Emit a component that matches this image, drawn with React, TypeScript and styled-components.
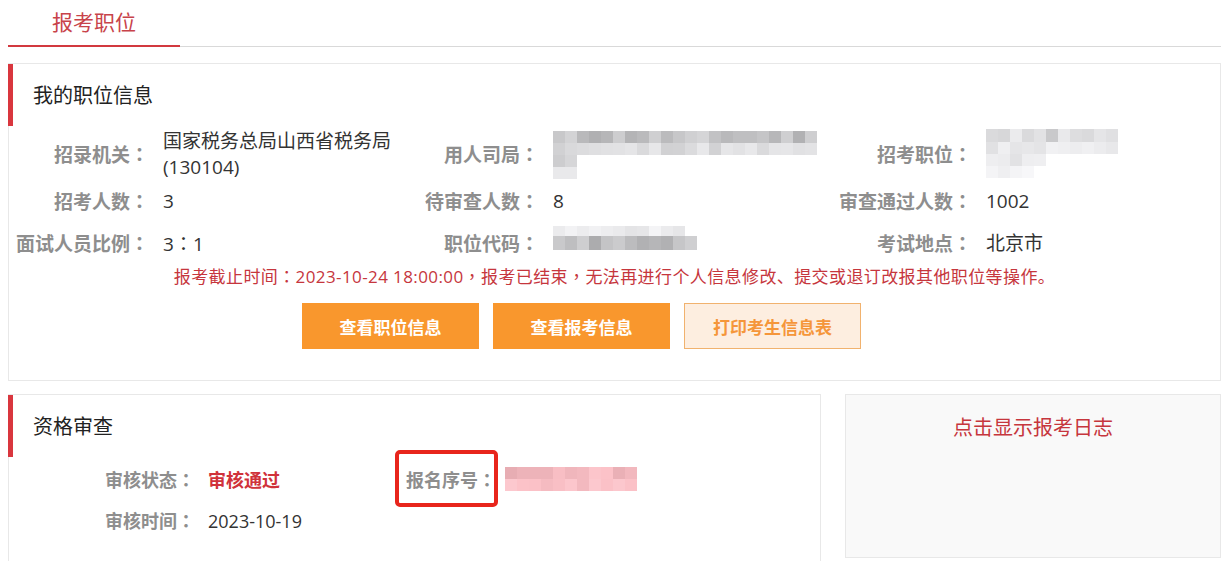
import React from "react";
import styled, { createGlobalStyle } from "styled-components";

const GlobalStyle = createGlobalStyle`
    body {
        margin: 0;
        background: #fff;
        font-family: "Open Sans", "Noto Sans CJK SC", sans-serif;
        color: #333;
    }
`;

const Page = styled.div`
    width: 1213px;
    padding-left: 8px;
`;

const TabBar = styled.div`
    display: flex;
    border-bottom: 1px solid #d9d9d9;
    margin-bottom: 16px;
`;

const Tab = styled.div`
    width: 172px;
    height: 45px;
    line-height: 45px;
    text-align: center;
    font-size: 21px;
    color: #c8434a;
    border-bottom: 2px solid #d2393f;
    margin-bottom: -1px;
`;

const Card = styled.div<{ $muted?: boolean }>`
    border: 1px solid #e8e8e8;
    background: ${(p) => (p.$muted ? "#f9f9f9" : "#fff")};
`;

const CardTitle = styled.div`
    height: 62px;
    line-height: 64px;
    margin-left: -1px;
    padding-left: 20px;
    border-left: 5px solid #d9363e;
    font-size: 20px;
    color: #222;
`;

// centred full-width punctuation, as the original font draws it
const Punct = styled.span`
    font-family: "Noto Sans CJK TC", sans-serif;
`;

const InfoGrid = styled.div`
    display: grid;
    grid-template-columns: 154px 260px 130px 279px 154px 1fr;
    grid-template-rows: 52px 42px 42px;
    margin-top: 2px;
`;

const Label = styled.div<{ $size?: number }>`
    align-self: center;
    text-align: right;
    padding-right: 14px;
    font-size: ${(p) => p.$size ?? 19}px;
    font-weight: bold;
    color: #8e8e8e;
    line-height: 26px;
    white-space: nowrap;
`;

const Value = styled.div<{ $top?: number; $strong?: boolean; $size?: number }>`
    align-self: ${(p) => (p.$top !== undefined ? "start" : "center")};
    margin-top: ${(p) => p.$top ?? 0}px;
    font-size: ${(p) => p.$size ?? 19}px;
    line-height: 26px;
    color: ${(p) => (p.$strong ? "#d0323a" : "#333")};
    font-weight: ${(p) => (p.$strong ? "bold" : "normal")};
`;

const Notice = styled.div`
    text-align: center;
    font-size: 17px;
    letter-spacing: 0.4px;
    line-height: 24px;
    color: #c6363d;
`;

const ButtonRow = styled.div`
    display: flex;
    gap: 14px;
    padding: 14px 0 31px 293px;
`;

const Button = styled.button<{ $light?: boolean }>`
    width: 177px;
    height: 46px;
    border: 1px solid ${(p) => (p.$light ? "#f1b26e" : "#f9972d")};
    background: ${(p) => (p.$light ? "#fdeee0" : "#f9972d")};
    color: ${(p) => (p.$light ? "#f5963a" : "#fff")};
    font-family: "Noto Sans CJK SC", sans-serif;
    font-size: 17px;
    font-weight: bold;
    cursor: pointer;
`;

const BottomRow = styled.div`
    display: flex;
    gap: 24px;
    margin-top: 13px;
`;

const AuditCard = styled(Card)`
    width: 811px;
    height: 190px;
`;

const LogCard = styled(Card)`
    flex: 1;
    box-sizing: border-box;
    height: 164px;
    padding-top: 20px;
    text-align: center;
    font-size: 20px;
    line-height: 26px;
    color: #c6363d;
    cursor: pointer;
`;

const AuditGrid = styled.div`
    display: grid;
    grid-template-columns: 199px 198px 99px 1fr;
    grid-auto-rows: 41px;
    margin-top: 2px;
`;

const AuditLabel = styled(Label)<{ $pad?: number }>`
    padding-right: ${(p) => p.$pad ?? 13}px;
`;

const Highlight = styled.span`
    position: relative;
    display: inline-block;
    line-height: 26px;
    &::after {
        content: "";
        position: absolute;
        top: -16px;
        bottom: -14px;
        left: -11px;
        right: -2px;
        border: 4px solid #e8251c;
        border-radius: 5px;
    }
`;

const MosaicGrid = styled.div`
    display: flex;
    flex-direction: column;
`;

const MosaicRow = styled.div`
    display: flex;
`;

const Cell = styled.span.attrs<{ $c: string; $w: number; $h: number }>((p) => ({
    style: { background: p.$c, width: p.$w, height: p.$h },
}))<{ $c: string; $w: number; $h: number }>`
    display: block;
    flex: none;
`;

function makeRand(seed: number) {
    let s = seed;
    return () => {
        s = (s * 9301 + 49297) % 233280;
        return s / 233280;
    };
}

type Tone = "gray" | "pink";

function rowColors(n: number, lo: number, hi: number, tone: Tone, r: () => number) {
    return Array.from({ length: n }, () => {
        const v = Math.round(lo + (hi - lo) * r());
        if (tone === "pink") {
            return `rgb(${Math.min(252, v + 18)},${v - 40},${v - 34})`;
        }
        return `rgb(${v},${v},${v + 2})`;
    });
}

interface MosaicSpec {
    cells: number;
    lo: number;
    hi: number;
    h: number;
}

function Mosaic({ rows, w, tone = "gray", seed }: { rows: MosaicSpec[]; w: number; tone?: Tone; seed: number }) {
    const r = makeRand(seed);
    return (
        <MosaicGrid>
            {rows.map((row, i) => (
                <MosaicRow key={i}>
                    {rowColors(row.cells, row.lo, row.hi, tone, r).map((c, j) => (
                        <Cell key={j} $c={c} $w={w} $h={row.h} />
                    ))}
                </MosaicRow>
            ))}
        </MosaicGrid>
    );
}

const C = () => <Punct>：</Punct>;

export default function App() {
    return (
        <Page>
            <GlobalStyle />
            <TabBar>
                <Tab>报考职位</Tab>
            </TabBar>

            <Card>
                <CardTitle>我的职位信息</CardTitle>
                <InfoGrid>
                    <Label>招录机关<C /></Label>
                    <Value>
                        国家税务总局山西省税务局
                        <br />
                        (130104)
                    </Value>
                    <Label>用人司局<C /></Label>
                    <Value $top={3}>
                        <Mosaic
                            seed={11}
                            w={12}
                            rows={[
                                { cells: 22, lo: 172, hi: 215, h: 12 },
                                { cells: 22, lo: 208, hi: 236, h: 12 },
                                { cells: 2, lo: 200, hi: 216, h: 12 },
                                { cells: 2, lo: 222, hi: 236, h: 12 },
                            ]}
                        />
                    </Value>
                    <Label>招考职位<C /></Label>
                    <Value $top={1}>
                        <Mosaic
                            seed={37}
                            w={12}
                            rows={[
                                { cells: 11, lo: 178, hi: 236, h: 13 },
                                { cells: 11, lo: 220, hi: 242, h: 12 },
                                { cells: 5, lo: 226, hi: 244, h: 12 },
                                { cells: 4, lo: 236, hi: 248, h: 12 },
                            ]}
                        />
                    </Value>

                    <Label>招考人数<C /></Label>
                    <Value>3</Value>
                    <Label>待审查人数<C /></Label>
                    <Value>8</Value>
                    <Label>审查通过人数<C /></Label>
                    <Value>1002</Value>

                    <Label>面试人员比例<C /></Label>
                    <Value>3<C />1</Value>
                    <Label>职位代码<C /></Label>
                    <Value $top={4}>
                        <Mosaic
                            seed={5}
                            w={12}
                            rows={[
                                { cells: 11, lo: 228, hi: 244, h: 10 },
                                { cells: 12, lo: 168, hi: 212, h: 14 },
                            ]}
                        />
                    </Value>
                    <Label>考试地点<C /></Label>
                    <Value>北京市</Value>
                </InfoGrid>
                <Notice>
                    报考截止时间<C />2023-10-24 18:00:00<Punct>，</Punct>报考已结束<Punct>，</Punct>
                    无法再进行个人信息修改、提交或退订改报其他职位等操作。
                </Notice>
                <ButtonRow>
                    <Button>查看职位信息</Button>
                    <Button>查看报考信息</Button>
                    <Button $light>打印考生信息表</Button>
                </ButtonRow>
            </Card>

            <BottomRow>
                <AuditCard>
                    <CardTitle>资格审查</CardTitle>
                    <AuditGrid>
                        <AuditLabel $size={18}>审核状态<C /></AuditLabel>
                        <Value $strong $size={18}>审核通过</Value>
                        <AuditLabel $size={18} $pad={9}>
                            <Highlight>报名序号<C /></Highlight>
                        </AuditLabel>
                        <Value $top={8}>
                            <Mosaic
                                seed={21}
                                w={12}
                                tone="pink"
                                rows={[
                                    { cells: 11, lo: 212, hi: 238, h: 12 },
                                    { cells: 11, lo: 222, hi: 240, h: 12 },
                                ]}
                            />
                        </Value>
                        <AuditLabel $size={18}>审核时间<C /></AuditLabel>
                        <Value $size={18}>2023-10-19</Value>
                    </AuditGrid>
                </AuditCard>
                <LogCard $muted>点击显示报考日志</LogCard>
            </BottomRow>
        </Page>
    );
}
